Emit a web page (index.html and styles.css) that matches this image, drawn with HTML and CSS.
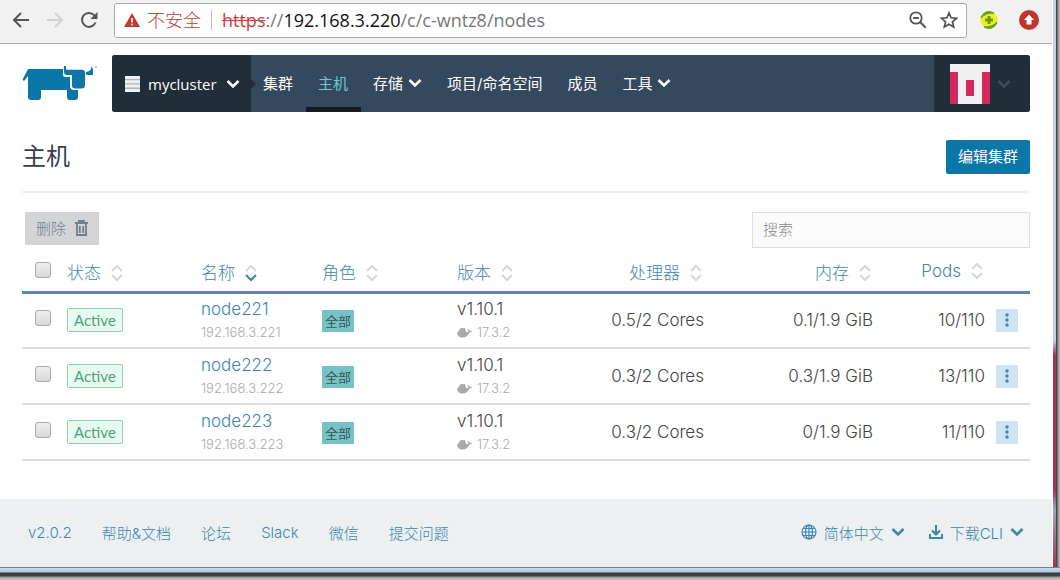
FILE: index.html
```html
<!DOCTYPE html>
<html lang="zh-CN">
<head>
  <meta charset="UTF-8">
  <title>主机</title>
  <link rel="stylesheet" href="styles.css">
</head>
<body>
  <svg class="sprite" aria-hidden="true">
    <symbol id="chevron" viewBox="0 0 14 10">
      <path d="M1.5 2 L7 7.500 L12.500 2" fill="none" stroke="currentColor" stroke-width="2.600"/>
    </symbol>
    <symbol id="sort" viewBox="0 0 12 18">
      <path class="sort-up" d="M1 7 L6 2 L11 7" fill="none" stroke-width="2"/>
      <path class="sort-down" d="M1 11 L6 16 L11 11" fill="none" stroke-width="2"/>
    </symbol>
    <symbol id="docker" viewBox="0 0 16 12">
      <path d="M0 5.500h12c.2-1.100 0-2-.5-2.800l.9-.7c.8.7 1.200 1.500 1.200 2.300.8-.2 1.700-.1 2.400.4-.5 1.100-1.600 1.500-2.900 1.500C12 9.600 9.500 11.500 6 11.500 2.200 11.500 0 9.500 0 5.500z" fill="currentColor"/>
      <path d="M1.500 3h8v2.500h-8zM3.500 1h5v2h-5z" fill="currentColor"/>
    </symbol>
    <symbol id="dots" viewBox="0 0 4 14">
      <circle cx="2" cy="2" r="1.700" fill="currentColor"/>
      <circle cx="2" cy="7" r="1.700" fill="currentColor"/>
      <circle cx="2" cy="12" r="1.700" fill="currentColor"/>
    </symbol>
  </svg>

  <div class="window">
    <div class="browser-bar">
      <button class="tool" aria-label="后退">
        <svg width="18" height="16" viewBox="0 0 18 16"><path d="M17 8H2M9 1L2 8l7 7" fill="none" stroke="#555" stroke-width="2"/></svg>
      </button>
      <button class="tool" aria-label="前进" disabled>
        <svg width="18" height="16" viewBox="0 0 18 16"><path d="M1 8h15M9 1l7 7-7 7" fill="none" stroke="#d2d2d2" stroke-width="2"/></svg>
      </button>
      <button class="tool" aria-label="刷新">
        <svg width="18" height="18" viewBox="0 0 18 18"><path d="M15.500 11.500A7 7 0 1 1 14.200 4.200L16 6" fill="none" stroke="#555" stroke-width="2"/><path d="M17.500 1v7h-7z" fill="#555"/></svg>
      </button>
      <div class="address">
        <svg width="16" height="14" viewBox="0 0 16 14"><path d="M8 0l8 14H0z" fill="#c5392f"/><path d="M7.200 5h1.600v4.500H7.200zM7.200 10.700h1.600v1.600H7.200z" fill="#fff"/></svg>
        <span class="insecure">不安全</span>
        <span class="url"><del>https</del>://<b>192.168.3.220</b>/c/c-wntz8/nodes</span>
        <button class="tool" aria-label="缩放">
          <svg width="18" height="18" viewBox="0 0 18 18"><circle cx="7" cy="7" r="5.700" fill="none" stroke="#555" stroke-width="1.800"/><path d="M4.200 7h5.600M11.300 11.300l5.500 5.500" fill="none" stroke="#555" stroke-width="2"/></svg>
        </button>
        <button class="tool" aria-label="收藏">
          <svg width="18" height="18" viewBox="0 0 18 18"><path d="M9 1.800l2.100 5 5.400.5-4.100 3.500 1.300 5.300L9 13.300l-4.700 2.800 1.300-5.300-4.100-3.500 5.400-.5z" fill="none" stroke="#555" stroke-width="1.700"/></svg>
        </button>
      </div>
      <div class="extensions">
        <svg width="18" height="18" viewBox="0 0 18 18"><circle cx="9" cy="9" r="8.500" fill="#eef01e"/><path d="M1 7A8.300 8.300 0 0 1 14 2.200Q6 1.500 1 7zM17 11a8.300 8.300 0 0 1-13 4.800Q12 16.500 17 11z" fill="#5f9f25" stroke="#5f9f25"/><path d="M9 5v8M5 9h8" stroke="#679a1c" stroke-width="3"/></svg>
        <svg width="20" height="20" viewBox="0 0 20 20"><circle cx="10" cy="10" r="10" fill="#c0352c"/><path d="M10 4.500l5 5.500h-2.500v4.500h-5V10H5z" fill="#fff"/></svg>
      </div>
    </div>

    <header>
      <a href="#" class="logo" aria-label="Rancher">
        <svg width="76" height="36" viewBox="0 0 76 36">
          <path d="M7 4h34v5.500q0 2.500 2.500 2.500H48v9q0 4 4 4h4v7q0 3-3 3h-5q-3 0-3-3v-7H19v7q0 3-3 3H9q-3 0-3-3V11L2 16l-1.500-1.500L5 6q.5-2 2-2z" fill="#0b77a9"/>
          <path d="M42 1h2v3q0 .8 1 .8h15q3 0 3 3V20q0 3.500-3.500 3.500H53q-3 0-3-3V10h-5q-3 0-3-3zM64 9V7q2.500 0 4.500-2L70 1l1 4v5h-5q-2 0-2-1z" fill="#0b77a9"/>
          <circle cx="74" cy="2" r="1" fill="#9cb9c7"/>
        </svg>
      </a>
      <nav>
        <button class="cluster">
          <svg width="15" height="16" viewBox="0 0 15 16"><path d="M0 0h15v16H0z" fill="#a9b4bc"/><path d="M0 0h15v3H0zM0 4.300h15v3H0zM0 8.600h15v3H0zM0 13h15v3H0z" fill="#eef1f3"/></svg>
          mycluster
          <svg class="chevron"><use href="#chevron"/></svg>
        </button>
        <a href="#">集群</a>
        <a href="#" class="active">主机</a>
        <a href="#">存储 <svg class="chevron"><use href="#chevron"/></svg></a>
        <a href="#">项目/命名空间</a>
        <a href="#">成员</a>
        <a href="#">工具 <svg class="chevron"><use href="#chevron"/></svg></a>
        <button class="user" aria-label="用户">
          <svg width="40" height="40" viewBox="0 0 40 40"><path d="M0 0h40v40H0z" fill="#f0f0f0"/><path d="M0 8h8v32H0zM32 8h8v32h-8zM16 16h8v16h-8z" fill="#d2285a"/></svg>
          <svg class="chevron"><use href="#chevron"/></svg>
        </button>
      </nav>
    </header>

    <main>
      <section class="title-row">
        <h1>主机</h1>
        <button class="primary">编辑集群</button>
      </section>

      <div class="table-tools">
        <button class="delete" disabled>删除
          <svg width="13" height="16" viewBox="0 0 13 16"><path d="M0 3h13M4 3V1h5v2M2 4v11h9V4M4.800 6v7M8.200 6v7" fill="none" stroke="currentColor" stroke-width="1.800"/></svg>
        </button>
        <input type="search" placeholder="搜索" aria-label="搜索">
      </div>

      <table>
        <colgroup>
          <col class="c-check"><col class="c-state"><col class="c-name"><col class="c-role"><col class="c-version"><col class="c-cpu"><col class="c-mem"><col class="c-pods"><col class="c-menu">
        </colgroup>
        <thead>
          <tr>
            <th class="check"><input type="checkbox" aria-label="全选"></th>
            <th>状态<svg class="sort"><use href="#sort"/></svg></th>
            <th>名称<svg class="sort sorted"><use href="#sort"/></svg></th>
            <th>角色<svg class="sort"><use href="#sort"/></svg></th>
            <th>版本<svg class="sort"><use href="#sort"/></svg></th>
            <th class="num">处理器<svg class="sort"><use href="#sort"/></svg></th>
            <th class="num">内存<svg class="sort"><use href="#sort"/></svg></th>
            <th class="num">Pods<svg class="sort"><use href="#sort"/></svg></th>
            <th></th>
          </tr>
        </thead>
        <tbody>
          <tr>
            <td class="check"><input type="checkbox" aria-label="node221"></td>
            <td><span class="state">Active</span></td>
            <td><a href="#">node221</a><small>192.168.3.221</small></td>
            <td><span class="role">全部</span></td>
            <td>v1.10.1<small><svg class="docker"><use href="#docker"/></svg>17.3.2</small></td>
            <td class="num">0.5/2 Cores</td>
            <td class="num">0.1/1.9 GiB</td>
            <td class="num">10/110</td>
            <td class="menu"><button aria-label="操作"><svg width="4" height="14"><use href="#dots"/></svg></button></td>
          </tr>
          <tr>
            <td class="check"><input type="checkbox" aria-label="node222"></td>
            <td><span class="state">Active</span></td>
            <td><a href="#">node222</a><small>192.168.3.222</small></td>
            <td><span class="role">全部</span></td>
            <td>v1.10.1<small><svg class="docker"><use href="#docker"/></svg>17.3.2</small></td>
            <td class="num">0.3/2 Cores</td>
            <td class="num">0.3/1.9 GiB</td>
            <td class="num">13/110</td>
            <td class="menu"><button aria-label="操作"><svg width="4" height="14"><use href="#dots"/></svg></button></td>
          </tr>
          <tr>
            <td class="check"><input type="checkbox" aria-label="node223"></td>
            <td><span class="state">Active</span></td>
            <td><a href="#">node223</a><small>192.168.3.223</small></td>
            <td><span class="role">全部</span></td>
            <td>v1.10.1<small><svg class="docker"><use href="#docker"/></svg>17.3.2</small></td>
            <td class="num">0.3/2 Cores</td>
            <td class="num">0/1.9 GiB</td>
            <td class="num">11/110</td>
            <td class="menu"><button aria-label="操作"><svg width="4" height="14"><use href="#dots"/></svg></button></td>
          </tr>
        </tbody>
      </table>
    </main>

    <footer>
      <a href="#">v2.0.2</a>
      <a href="#">帮助&amp;文档</a>
      <a href="#">论坛</a>
      <a href="#">Slack</a>
      <a href="#">微信</a>
      <a href="#">提交问题</a>
      <div class="footer-right">
        <button>
          <svg width="16" height="16" viewBox="0 0 16 16"><g fill="none" stroke="currentColor" stroke-width="1.200"><circle cx="8" cy="8" r="7"/><ellipse cx="8" cy="8" rx="3.500" ry="7"/><path d="M8 1v14M1 8h14M2 4.500h12M2 11.500h12"/></g></svg>
          简体中文
          <svg class="chevron"><use href="#chevron"/></svg>
        </button>
        <button>
          <svg width="14" height="14" viewBox="0 0 14 14"><path d="M7 0v9M3 5.500l4 4 4-4M1 9v4h12V9" fill="none" stroke="currentColor" stroke-width="2"/></svg>
          下载CLI
          <svg class="chevron"><use href="#chevron"/></svg>
        </button>
      </div>
    </footer>
  </div>
  <div class="side-edge"></div>
  <div class="bottom-edge"></div>
</body>
</html>
```
FILE: styles.css
```css
* {
  box-sizing: border-box;
}

body {
  margin: 0;
  min-height: 100vh;
  display: grid;
  grid-template-columns: 1fr 7px;
  grid-template-rows: 1fr 13px;
  background: #fff;
  color: #444;
  font-family: Inter, "Noto Sans CJK SC", sans-serif;
  font-size: 17px;
  font-weight: 300;
}

button {
  font: inherit;
  color: inherit;
  border: none;
  background: none;
  padding: 0;
  cursor: pointer;
}

a {
  color: #3d86ae;
  text-decoration: none;
}

.sprite {
  position: absolute;
  width: 0;
  height: 0;
}

.window {
  display: flex;
  flex-direction: column;
  padding-right: 1px;
}

/* browser toolbar */
.browser-bar {
  display: flex;
  align-items: center;
  height: 44px;
  padding: 0 13px 3px 12px;
  background: #f1f1f1;
  border-bottom: 1px solid #a9a9a9;
}

.tool {
  display: flex;
  margin-right: 16px;
}

.address {
  flex: 1;
  display: flex;
  align-items: center;
  height: 35px;
  padding: 0 8px 0 9px;
  background: #fff;
  border: 1px solid #a9a9a9;
  border-radius: 3px;
  font-family: "Open Sans", "Noto Sans CJK SC", sans-serif;
  font-size: 18px;
  font-weight: 400;
  color: #777;
}

.address .tool {
  margin: 0 0 0 13px;
}

.insecure {
  margin-left: 7px;
  padding-right: 10px;
  border-right: 1px solid #bbb;
  line-height: 20px;
  font-weight: 300;
  color: #b8423a;
}

.url {
  flex: 1;
  margin-left: 10px;
}

.url del {
  color: #c0443b;
}

.url b {
  font-weight: 400;
  color: #111;
}

.extensions {
  display: flex;
  align-items: center;
  gap: 21px;
  margin-left: 13px;
}

/* header */
header {
  display: flex;
  align-items: center;
  padding: 11px 22px 0;
}

.logo {
  width: 90px;
  display: flex;
  padding-bottom: 2px;
}

nav {
  flex: 1;
  display: flex;
  height: 57px;
  background: #34495e;
  border-radius: 3px;
  overflow: hidden;
  font-size: 15px;
  font-weight: 400;
}

nav a {
  display: flex;
  align-items: center;
  gap: 5px;
  padding: 0 13px 2px 12px;
  color: #fff;
}

nav a.active {
  color: #6ccace;
  box-shadow: inset 0 -5px #141b22;
}

.chevron {
  width: 14px;
  height: 10px;
}

.cluster {
  position: relative;
  display: flex;
  align-items: center;
  gap: 8px;
  width: 139px;
  padding: 0 11px 0 13px;
  background: #222d3a;
  color: #fff;
  font-family: "Open Sans", sans-serif;
  font-size: 15px;
}

.cluster::after {
  content: "";
  position: absolute;
  left: 100%;
  top: 24px;
  border: 5px solid transparent;
  border-left-color: #222d3a;
}

.cluster .chevron {
  margin-left: auto;
  flex: none;
}

.user {
  display: flex;
  align-items: center;
  gap: 7px;
  width: 96px;
  margin-left: auto;
  padding-left: 16px;
  background: #222d3a;
  color: #3a4b5c;
}

/* page */
main {
  flex: 1;
  padding: 0 22px;
}

.title-row {
  display: flex;
  align-items: center;
  justify-content: space-between;
  height: 81px;
  padding-top: 10px;
  border-bottom: 2px solid #eee;
  color: #34404c;
}

h1 {
  margin: 0;
  font-size: 24px;
  line-height: 32px;
  font-weight: 400;
}

.primary {
  height: 34px;
  padding: 0 12px 2px;
  background: #0b77a9;
  border-radius: 2px;
  color: #fff;
  font-size: 15px;
  font-weight: 400;
}

.table-tools {
  display: flex;
  align-items: flex-start;
  justify-content: space-between;
  padding: 19px 0 0 3px;
}

.delete {
  display: flex;
  align-items: center;
  gap: 9px;
  height: 33px;
  padding: 0 11px 2px;
  background: #d3d4d7;
  color: #717f8c;
  font-size: 15px;
  cursor: not-allowed;
}

.table-tools input {
  width: 278px;
  height: 36px;
  padding: 0 10px 2px;
  border: 1px solid #dcdee7;
  background: #fbfbfb;
  font: inherit;
  font-size: 15px;
}

.table-tools input::placeholder {
  color: #888;
}

table {
  width: 100%;
  table-layout: fixed;
  border-collapse: collapse;
}

.c-check { width: 45px; }
.c-state { width: 134px; }
.c-name { width: 121px; }
.c-role { width: 135px; }
.c-version { width: 113px; }
.c-cpu { width: 134px; }
.c-mem { width: 169px; }
.c-pods { width: 112px; }
.c-menu { width: 45px; }

th, td {
  padding: 0;
  text-align: left;
  vertical-align: middle;
}

th {
  height: 44px;
  padding-top: 4px;
  border-bottom: 3px solid #4a8fb0;
  color: #3d86ae;
  font-size: 17px;
  font-weight: 300;
}

td {
  height: 56px;
  border-bottom: 2px solid #ddd;
  line-height: 24px;
}

.num {
  text-align: right;
}

td small {
  display: block;
  line-height: 22px;
  font-size: 13px;
  color: #aaa;
}

.sort {
  width: 12px;
  height: 18px;
  margin: 0 2px 0 10px;
  vertical-align: -3px;
  stroke: #d3d9d9;
}

.sort.sorted {
  --down: #3586b0;
}

.sort-down {
  stroke: var(--down, #d3d9d9);
}

.check {
  padding-left: 13px;
}

td.check {
  padding-bottom: 4px;
}

th.check {
  padding-top: 2px;
}

.check input {
  appearance: none;
  display: block;
  width: 16px;
  height: 16px;
  margin: 0;
  border: 1px solid #aaa;
  border-radius: 3px;
  background: linear-gradient(#eee, #d9d9d9);
}

.state {
  display: inline-block;
  padding: 0 6px;
  border: 1px solid #8fd3ae;
  border-radius: 2px;
  background: #e8fbf1;
  color: #4aa578;
  font-family: Lato, sans-serif;
  font-size: 15px;
  font-weight: 400;
  line-height: 22px;
}

.role {
  display: inline-block;
  padding: 0 3px;
  background: #74c4c6;
  color: #222;
  font-size: 13px;
  line-height: 22px;
}

.docker {
  width: 15px;
  height: 11px;
  margin-right: 5px;
  vertical-align: -1px;
}

.menu {
  padding-left: 11px;
}

.menu button {
  display: flex;
  align-items: center;
  justify-content: center;
  width: 22px;
  height: 23px;
  background: #cfe3f2;
  color: #3d86ae;
}

footer {
  display: flex;
  align-items: center;
  gap: 30px;
  height: 68px;
  padding: 0 28px 2px;
  background: #ecf0f1;
  color: #3d86ae;
  font-size: 15px;
}

.footer-right {
  display: flex;
  gap: 24px;
  margin-left: auto;
}

.footer-right button {
  display: flex;
  align-items: center;
  gap: 7px;
}

/* window frame */
.side-edge {
  background:
    linear-gradient(to right, transparent 3px, #333 3px, #888 5px, #ccc),
    linear-gradient(#bfd2e8 0, #bfd2e8 340px, #a83252 355px, #a83252 490px, #94a9bc 510px, #a83252);
}

.bottom-edge {
  grid-column: 1 / 3;
  background: linear-gradient(#66849c 1px, #c9dcea 1px, #b4cad8 5px, #333a40 6px, #444 9px, #999 10px, #ccc 13px);
}
```
